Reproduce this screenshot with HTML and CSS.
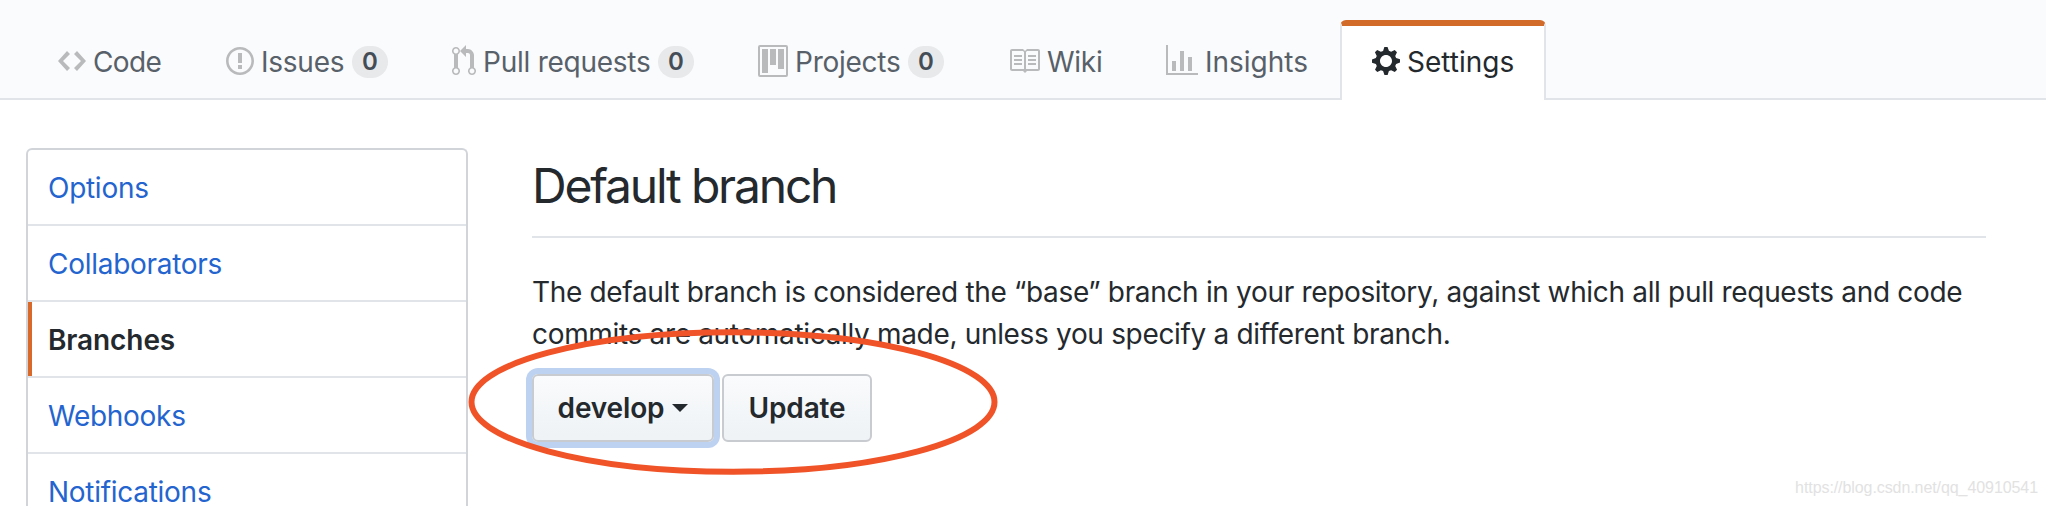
FILE: index.html
```html
<!DOCTYPE html>
<html lang="en">
<head>
<meta charset="utf-8">
<title>Settings - Branches</title>
<link rel="stylesheet" href="styles.css">
</head>
<body>
<nav class="repo-nav">
  <a class="tab tab-code"><svg class="icon" width="28" height="32" viewBox="0 0 14 16"><path fill-rule="evenodd" d="M9.5 3L8 4.5 11.5 8 8 11.5 9.5 13 14 8 9.5 3zm-5 0L0 8l4.5 5L6 11.5 2.5 8 6 4.500 4.500 3z"/></svg><span class="label">Code</span></a>
  <a class="tab tab-issues"><svg class="icon" width="28" height="32" viewBox="0 0 14 16"><path fill-rule="evenodd" d="M7 2.300c3.140 0 5.700 2.560 5.700 5.700s-2.560 5.700-5.700 5.700A5.710 5.710 0 0 1 1.300 8c0-3.140 2.560-5.700 5.700-5.700zM7 1C3.140 1 0 4.140 0 8s3.140 7 7 7 7-3.140 7-7-3.140-7-7-7zm1 3H6v5h2V4zm0 6H6v2h2v-2z"/></svg><span class="label">Issues</span><span class="counter">0</span></a>
  <a class="tab tab-pulls"><svg class="icon" width="24" height="32" viewBox="0 0 12 16"><path fill-rule="evenodd" d="M11 11.280V5c-.03-.78-.34-1.470-.94-2.060C9.460 2.350 8.780 2.030 8 2H7V0L4 3l3 3V4h1c.27.02.48.11.69.31.21.2.3.42.31.69v6.280A1.993 1.993 0 0 0 10 15a1.993 1.993 0 0 0 1-3.720zm-1 2.920c-.66 0-1.200-.55-1.200-1.200 0-.65.55-1.200 1.200-1.200.65 0 1.200.55 1.200 1.200 0 .65-.55 1.200-1.200 1.200zM4 3c0-1.110-.89-2-2-2a1.993 1.993 0 0 0-1 3.720v6.560A1.993 1.993 0 0 0 2 15a1.993 1.993 0 0 0 1-3.720V4.720c.59-.34 1-.98 1-1.720zm-.8 10c0 .66-.55 1.200-1.200 1.200-.65 0-1.200-.55-1.200-1.200 0-.65.55-1.200 1.200-1.200.65 0 1.200.55 1.200 1.200zM2 4.200C1.340 4.200.8 3.650.8 3c0-.65.55-1.200 1.200-1.200.65 0 1.200.55 1.200 1.200 0 .65-.55 1.200-1.200 1.200z"/></svg><span class="label">Pull requests</span><span class="counter">0</span></a>
  <a class="tab tab-projects"><svg class="icon" width="30" height="32" viewBox="0 0 15 16"><path fill-rule="evenodd" d="M10 12h3V2h-3v10zm-4-2h3V2H6v8zm-4 4h3V2H2v12zm-1 1h13V1H1v14zM14 0H1a1 1 0 0 0-1 1v14a1 1 0 0 0 1 1h13a1 1 0 0 0 1-1V1a1 1 0 0 0-1-1z"/></svg><span class="label">Projects</span><span class="counter">0</span></a>
  <a class="tab tab-wiki"><svg class="icon" width="32" height="32" viewBox="0 0 16 16"><path fill-rule="evenodd" d="M3 5h4v1H3V5zm0 3h4V7H3v1zm0 2h4V9H3v1zm11-5h-4v1h4V5zm0 2h-4v1h4V7zm0 2h-4v1h4V9zm2-6v9c0 .55-.45 1-1 1H9.500l-1 1-1-1H2c-.55 0-1-.45-1-1V3c0-.55.45-1 1-1h5.500l1 1 1-1H15c.55 0 1 .45 1 1zm-8 .5L7.500 3H2v9h6V3.500zm7-.5H9.500l-.5.5V12h6V3z"/></svg><span class="label">Wiki</span></a>
  <a class="tab tab-insights"><svg class="icon" width="32" height="32" viewBox="0 0 16 16"><path fill-rule="evenodd" d="M16 14v1H0V0h1v14h15zM5 13H3V8h2v5zm4 0H7V3h2v10zm4 0h-2V6h2v7z"/></svg><span class="label">Insights</span></a>
  <a class="tab tab-settings selected"><svg class="icon" width="28" height="32" viewBox="0 0 14 16"><path fill-rule="evenodd" d="M14 8.770v-1.600l-1.940-.64-.45-1.090.88-1.840-1.130-1.130-1.810.91-1.090-.45-.69-1.920h-1.600l-.63 1.940-1.110.45-1.840-.88-1.130 1.130.91 1.810-.45 1.090L0 7.230v1.590l1.940.64.45 1.090-.88 1.840 1.130 1.130 1.810-.91 1.090.45.69 1.920h1.590l.63-1.940 1.110-.45 1.840.88 1.130-1.130-.92-1.810.47-1.090L14 8.750v.02zM7 11c-1.660 0-3-1.340-3-3s1.340-3 3-3 3 1.340 3 3-1.340 3-3 3z"/></svg><span class="label">Settings</span></a>
</nav>
<div class="page">
  <aside class="menu">
    <a class="menu-item">Options</a>
    <a class="menu-item">Collaborators</a>
    <a class="menu-item current">Branches</a>
    <a class="menu-item">Webhooks</a>
    <a class="menu-item">Notifications</a>
  </aside>
  <main class="content">
    <h2 class="heading">Default branch</h2>
    <p class="description"><span class="line">The default branch is considered the “base” branch in your repository, against which all pull requests and code</span> <span class="line">commits are automatically made, unless you specify a different branch.</span></p>
    <div class="actions">
      <button class="btn btn-select"><span>develop</span><i class="caret"></i></button>
      <button class="btn btn-update">Update</button>
    </div>
  </main>
</div>
<svg class="highlight" width="532" height="150" viewBox="0 0 532 150"><ellipse cx="266" cy="75" rx="261.5" ry="69.700"/></svg>
<div class="watermark">https://blog.csdn.net/qq_40910541</div>
</body>
</html>
```
FILE: styles.css
```css
* { box-sizing: border-box; }

body {
  margin: 0;
  width: 2046px;
  height: 506px;
  overflow: hidden;
  position: relative;
  background: #fff;
  color: #24292e;
  font-family: Inter, "Liberation Sans", sans-serif;
  font-size: 28px;
  line-height: 42px;
}

.repo-nav {
  display: flex;
  align-items: flex-end;
  height: 100px;
  padding-left: 26px;
  background: #fafbfc;
  box-shadow: inset 0 -2px #e1e4e8;
}

.tab {
  display: flex;
  align-items: center;
  flex: none;
  height: 80px;
  padding: 0 30px 4px;
  border: 2px solid transparent;
  border-top: 6px solid transparent;
  border-bottom: 0;
  border-radius: 6px 6px 0 0;
  color: #586069;
  white-space: nowrap;
}

.tab-code { width: 168px; }
.tab-issues { width: 226px; }
.tab-pulls { width: 306px; }
.tab-projects { width: 250px; }
.tab-wiki { width: 158px; }
.tab-insights { width: 206px; }
.tab-settings { width: 206px; }

.icon {
  flex: none;
  margin-right: 7px;
  fill: #b9babc;
}

.label {
  padding-top: 2px;
  letter-spacing: -0.25px;
}

.tab-code .label { letter-spacing: -0.6px; }
.tab-insights .label,
.tab-settings .label { letter-spacing: 0; }

.counter {
  width: 36px;
  height: 32px;
  margin-top: 2px;
  margin-left: auto;
  border-radius: 20px;
  background: #e8e9eb;
  color: #444d56;
  font-size: 24px;
  font-weight: 600;
  line-height: 32px;
  text-align: center;
}

.selected {
  border-color: #d26a2a #e1e4e8 transparent;
  background: #fff;
  color: #24292e;
}

.selected .icon { fill: #24292e; }

.page {
  display: flex;
  gap: 64px;
  padding: 48px 60px 0 26px;
}

.menu {
  flex: none;
  width: 442px;
  height: 358px;
  overflow: hidden;
  border: 2px solid #d1d5da;
  border-bottom: 0;
  border-radius: 6px 6px 0 0;
}

.menu-item {
  display: block;
  height: 76px;
  padding: 17px 20px 0;
  border-bottom: 2px solid #e1e4e8;
  color: #2464cf;
  letter-spacing: -0.28px;
}

.current {
  box-shadow: inset 4px 0 #d9692b;
  color: #24292e;
  font-weight: 600;
  letter-spacing: -0.1px;
}

.content {
  flex: 1;
  min-width: 0;
}

.heading {
  height: 90px;
  margin: 0 0 33px;
  padding-top: 2px;
  border-bottom: 2px solid #e1e4e8;
  font-size: 48px;
  font-weight: 400;
  line-height: 72px;
  letter-spacing: -2.2px;
}

.description { margin: 0; }

.line {
  display: block;
  white-space: nowrap;
  letter-spacing: -0.33px;
}

.actions {
  display: flex;
  gap: 8px;
  margin-top: 19px;
}

.btn {
  display: flex;
  align-items: center;
  justify-content: center;
  height: 68px;
  padding: 0;
  border: 2px solid #c8cbcf;
  border-radius: 6px;
  background: linear-gradient(#fafbfc, #eff3f6 90%);
  color: #24292e;
  font: 600 28px/42px Inter, "Liberation Sans", sans-serif;
  letter-spacing: -0.15px;
}

.btn-select {
  width: 182px;
  gap: 8px;
  box-shadow: 0 0 0 6px #bdd2f1;
}

.btn-update { width: 150px; }

.caret {
  border: 8px solid transparent;
  border-top-color: #24292e;
  border-bottom: 0;
}

.highlight {
  position: absolute;
  left: 467px;
  top: 327px;
  fill: none;
  stroke: #ef5327;
  stroke-width: 6px;
}

.watermark {
  position: absolute;
  right: 8px;
  bottom: 8px;
  color: #e2e2e2;
  font: 16px/20px "Liberation Sans", Arial, sans-serif;
  letter-spacing: -0.08px;
}
```
